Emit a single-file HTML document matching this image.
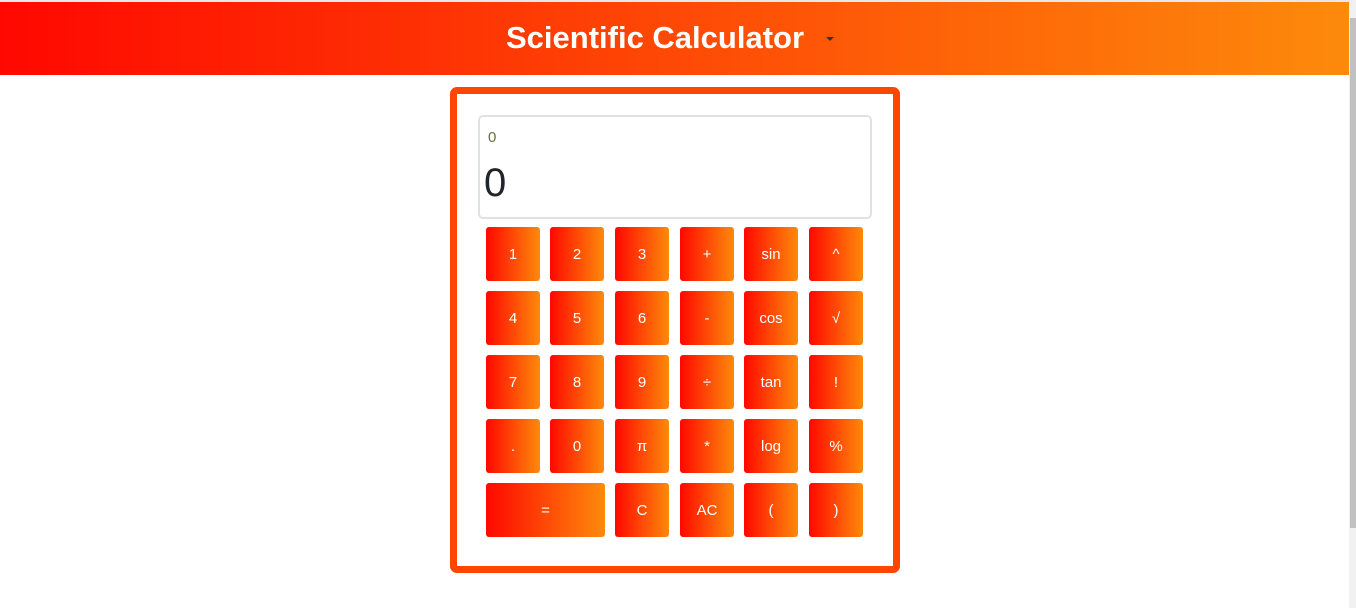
<!DOCTYPE html>
<html><head><style>
body{margin:0;width:1356px;height:608px;overflow:hidden;background:#fff;font-family:"Liberation Sans",sans-serif;position:relative}
.hdr{position:absolute;left:0;top:2px;width:1349px;height:73px;background:linear-gradient(90deg,#ff0800,#fd8a0b)}
.top{position:absolute;left:0;top:0;width:1356px;height:2px;background:#e8e8e8}
.title{position:absolute;left:0;width:1310px;top:20px;text-align:center;color:#fff;font-weight:bold;font-size:31px}
.caret{position:absolute;left:826px;top:37px;width:0;height:0;border-left:4px solid transparent;border-right:4px solid transparent;border-top:4px solid #333}
.sb{position:absolute;left:1349px;top:0;width:7px;height:608px;background:#f1f1f1}
.th{position:absolute;left:1350px;top:18px;width:6px;height:510px;background:#c1c1c1}
.card{position:absolute;left:450px;top:87px;width:436px;height:472px;border:7px solid #ff4500;border-radius:7px;background:#fff}
.disp{position:absolute;left:478px;top:115px;width:390px;height:100px;border:2px solid #dee2e6;border-radius:5px}
.s{position:absolute;left:8px;top:12px;font-size:15px;color:#6b6b40}
.m{position:absolute;left:4px;top:44px;font-size:40px;color:#212529}
.b{position:absolute;width:54px;height:54px;border-radius:3px;background:linear-gradient(90deg,#ff0800,#fd8a0b);color:#fff;font-size:15px;display:flex;align-items:center;justify-content:center}
</style></head><body>
<div class="top"></div>
<div class="hdr"></div>
<div class="title">Scientific Calculator</div>
<div class="caret"></div>
<div class="sb"></div><div class="th"></div>
<div class="card"></div>
<div class="disp"><div class="s">0</div><div class="m">0</div></div>
<div class="b" style="left:486px;top:227px">1</div><div class="b" style="left:550px;top:227px">2</div><div class="b" style="left:615px;top:227px">3</div><div class="b" style="left:680px;top:227px">+</div><div class="b" style="left:744px;top:227px">sin</div><div class="b" style="left:809px;top:227px">^</div>
<div class="b" style="left:486px;top:291px">4</div><div class="b" style="left:550px;top:291px">5</div><div class="b" style="left:615px;top:291px">6</div><div class="b" style="left:680px;top:291px">-</div><div class="b" style="left:744px;top:291px">cos</div><div class="b" style="left:809px;top:291px">√</div>
<div class="b" style="left:486px;top:355px">7</div><div class="b" style="left:550px;top:355px">8</div><div class="b" style="left:615px;top:355px">9</div><div class="b" style="left:680px;top:355px">÷</div><div class="b" style="left:744px;top:355px">tan</div><div class="b" style="left:809px;top:355px">!</div>
<div class="b" style="left:486px;top:419px">.</div><div class="b" style="left:550px;top:419px">0</div><div class="b" style="left:615px;top:419px">π</div><div class="b" style="left:680px;top:419px">*</div><div class="b" style="left:744px;top:419px">log</div><div class="b" style="left:809px;top:419px">%</div>
<div class="b" style="left:486px;top:483px;width:119px">=</div><div class="b" style="left:615px;top:483px">C</div><div class="b" style="left:680px;top:483px">AC</div><div class="b" style="left:744px;top:483px">(</div><div class="b" style="left:809px;top:483px">)</div>
</body></html>
